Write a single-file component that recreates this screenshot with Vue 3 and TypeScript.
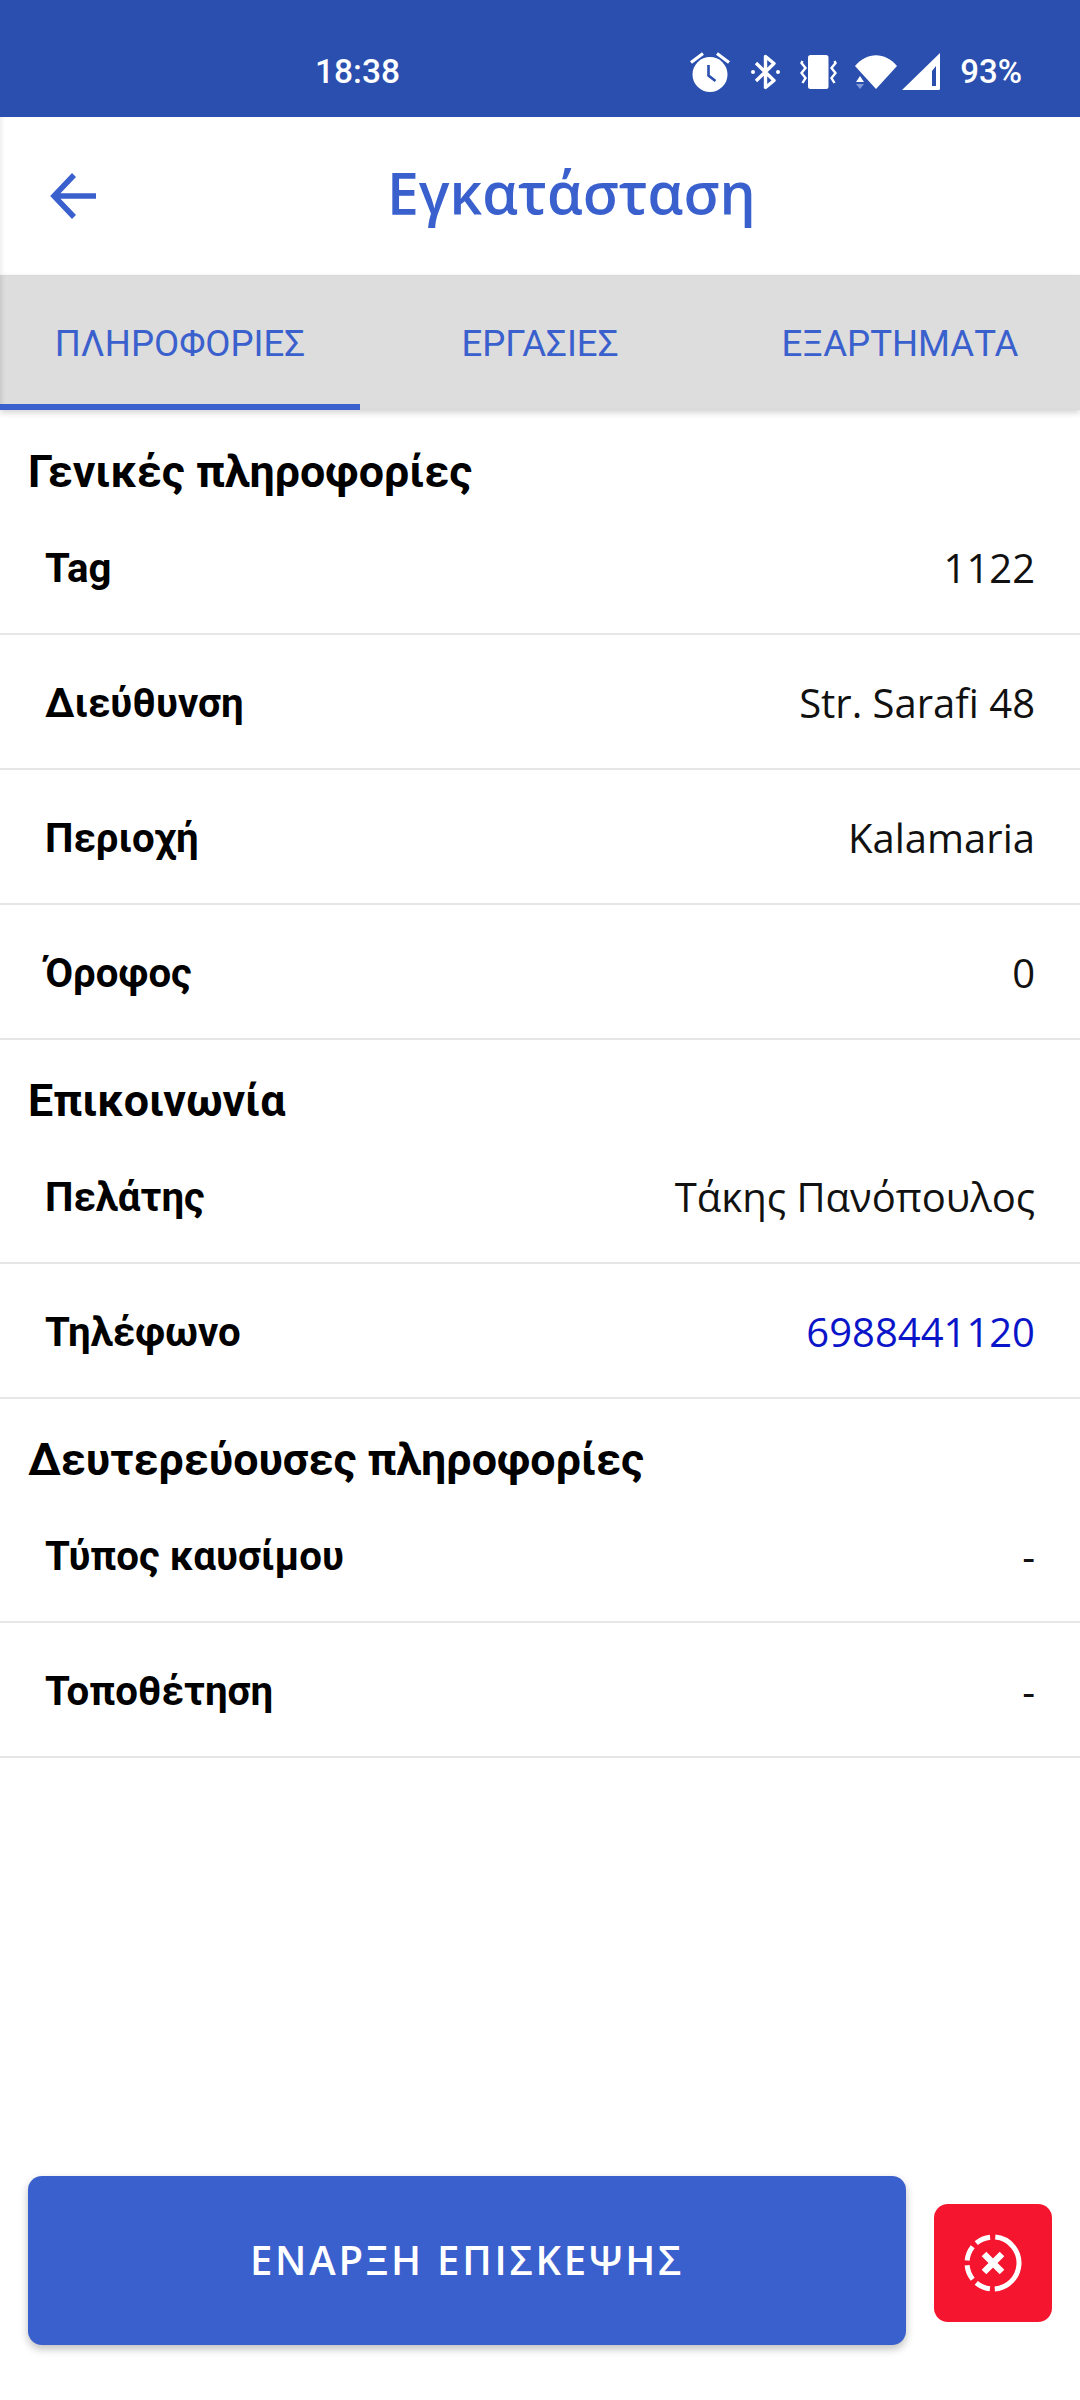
<script setup lang="ts">
interface Row { label: string; value: string; link?: boolean }
interface Section { title: string; rows: Row[] }
const tabs: string[] = ['ΠΛΗΡΟΦΟΡΙΕΣ', 'ΕΡΓΑΣΙΕΣ', 'ΕΞΑΡΤΗΜΑΤΑ']
const sections: Section[] = [
  { title: 'Γενικές πληροφορίες', rows: [
    { label: 'Tag', value: '1122' },
    { label: 'Διεύθυνση', value: 'Str. Sarafi 48' },
    { label: 'Περιοχή', value: 'Kalamaria' },
    { label: 'Όροφος', value: '0' },
  ] },
  { title: 'Επικοινωνία', rows: [
    { label: 'Πελάτης', value: 'Τάκης Πανόπουλος' },
    { label: 'Τηλέφωνο', value: '6988441120', link: true },
  ] },
  { title: 'Δευτερεύουσες πληροφορίες', rows: [
    { label: 'Τύπος καυσίμου', value: '-' },
    { label: 'Τοποθέτηση', value: '-' },
  ] },
]
</script>

<template>
  <div class="screen">
    <div class="status">
      <span class="time">18:38</span>
      <div class="status-right">
        <svg class="ic alarm" width="40" height="40" viewBox="0 0 40 40">
          <path d="M1 10.5 L13 1.5 M39 10.5 L27 1.5" stroke="#fff" stroke-width="3.2" fill="none"/>
          <circle cx="20" cy="22.5" r="17.5" fill="#fff"/>
          <path d="M18.5 13 V23.5 L25.5 29" stroke="#2a4fae" stroke-width="2.6" fill="none"/>
        </svg>
        <svg class="ic bt" width="29" height="36" viewBox="0 0 29 36">
          <path d="M5 9 L23 26.5 L14.5 33.5 V2.5 L23 9.5 L5 27" stroke="#fff" stroke-width="3.4" fill="none" stroke-linejoin="round"/>
          <circle cx="2" cy="18" r="2" fill="#fff"/>
          <circle cx="27" cy="18" r="2" fill="#fff"/>
        </svg>
        <svg class="ic vib" width="37" height="34" viewBox="0 0 37 34">
          <rect x="8" y="0" width="20.5" height="34" rx="2.5" fill="#fff"/>
          <path d="M2.5 6 L1.5 8 L5.5 13 L1.5 18 L5.5 23 L2.5 28 M34.5 6 L35.5 8 L31.5 13 L35.5 18 L31.5 23 L34.5 28" stroke="#fff" stroke-width="2.4" fill="none"/>
        </svg>
        <svg class="ic wifi" width="42" height="34" viewBox="0 0 42 34">
          <path d="M0 11 C12 -3.5 30 -3.5 42 11 L21 34 Z" fill="#fff"/>
          <path d="M1 27 L5 21 L9 27 Z" fill="#fff"/>
          <path d="M1 29 L9 29 L5 34 Z" fill="#7e97d6"/>
        </svg>
        <svg class="ic sig" width="38" height="37" viewBox="0 0 38 37">
          <path fill-rule="evenodd" d="M38 0 V35.5 Q38 37 36.5 37 H0 Z M34 13 L30 18 V33 H34 Z" fill="#fff"/>
        </svg>
        <span class="pct">93%</span>
      </div>
    </div>

    <header class="topbar">
      <svg class="back" width="46" height="46" viewBox="0 0 46 46">
        <path d="M24 2 L4 23 L24 44 M4 23 H46" stroke="#3a60cd" stroke-width="5.5" fill="none"/>
      </svg>
      <h1 class="title">Εγκατάσταση</h1>
    </header>

    <nav class="tabs">
      <div v-for="(t, i) in tabs" :key="t" class="tab" :class="{ active: i === 0 }">{{ t }}</div>
    </nav>

    <main class="content">
      <section v-for="s in sections" :key="s.title">
        <h2 class="sec">{{ s.title }}</h2>
        <div v-for="r in s.rows" :key="r.label" class="row">
          <span class="label">{{ r.label }}</span>
          <span class="value" :class="{ link: r.link }">{{ r.value }}</span>
        </div>
      </section>
    </main>

    <footer class="actions">
      <button class="start">ΕΝΑΡΞΗ ΕΠΙΣΚΕΨΗΣ</button>
      <button class="cancel" aria-label="cancel">
        <svg width="60" height="60" viewBox="0 0 60 60">
          <circle cx="30" cy="30" r="26" stroke="#fff" stroke-width="5" fill="none" stroke-dasharray="77 5 15 5 15 5 15 5 15 6" transform="rotate(-85 30 30)"/>
          <path d="M21 21 L39 39 M39 21 L21 39" stroke="#fff" stroke-width="6.5" fill="none"/>
        </svg>
      </button>
    </footer>
  </div>
</template>

<style scoped>
.screen {
  width: 1080px;
  height: 2400px;
  background: #fff;
  display: flex;
  flex-direction: column;
  overflow: hidden;
  font-family: "Roboto", sans-serif;
}
.status {
  height: 117px;
  flex: none;
  background: #2a4fae;
  color: #fff;
  display: flex;
  align-items: center;
  padding-top: 26px;
  box-sizing: border-box;
  font-size: 33.5px;
  font-weight: 500;
}
.time { margin-left: 315px; }
.status-right {
  margin-left: auto;
  margin-right: 58px;
  display: flex;
  align-items: center;
}
.ic { display: block; flex: none; }
.bt { margin-left: 21px; }
.vib { margin-left: 20px; }
.wifi { margin-left: 18px; }
.sig { margin-left: 5px; }
.pct { margin-left: 20px; font-size: 33px; }
.topbar {
  height: 158px;
  flex: none;
  display: flex;
  align-items: center;
  background: #fff;
  box-shadow: inset 4px 0 4px -2px rgba(0,0,0,0.07);
}
.back { margin-left: 50px; flex: none; }
.title {
  margin: 0 0 8px 291px;
  font-family: "Open Sans", sans-serif;
  font-size: 57px;
  font-weight: 600;
  color: #3a60cd;
}
.tabs {
  height: 135px;
  flex: none;
  background: #dddddd;
  display: flex;
  box-shadow: 0 3px 6px rgba(0,0,0,0.16), inset 4px 0 4px -2px rgba(0,0,0,0.1);
  position: relative;
}
.tab {
  width: 360px;
  box-sizing: border-box;
  border-bottom: 6px solid transparent;
  padding-top: 8px;
  display: flex;
  align-items: center;
  justify-content: center;
  color: #3a60cd;
  font-size: 36.6px;
}
.tab.active { border-bottom-color: #3a60cd; }
.content { flex: 1; }
.sec {
  margin: 0;
  padding: 33px 0 0 28px;
  height: 89px;
  box-sizing: border-box;
  display: flex;
  align-items: center;
  font-size: 44.8px;
  font-weight: 700;
  color: #000;
}
section:first-child .sec { height: 89.5px; }
.row {
  height: 135px;
  box-sizing: border-box;
  border-bottom: 2px solid #e6e6e6;
  padding: 4px 45px 0;
  display: flex;
  align-items: center;
  justify-content: space-between;
}
.label { font-size: 40.2px; font-weight: 700; color: #000; }
.value { font-family: "Open Sans", sans-serif; font-size: 40px; color: #111; margin-bottom: 2px; }
.value.link { color: #0a14c8; }
.actions {
  flex: none;
  height: 224px;
  display: flex;
  align-items: flex-start;
  padding-left: 28px;
  box-sizing: border-box;
}
button { border: none; padding: 0; cursor: pointer; }
.start {
  width: 878px;
  height: 169px;
  padding-bottom: 2px;
  border-radius: 14px;
  background: #3a60cd;
  color: #fff;
  font-family: "Open Sans", sans-serif;
  font-size: 40px;
  font-weight: 600;
  letter-spacing: 2.8px;
  box-shadow: 0 4px 8px rgba(0,0,0,0.25);
}
.cancel {
  margin: 28px 0 0 28px;
  width: 118px;
  height: 118px;
  border-radius: 14px;
  background: #f5152f;
  display: flex;
  align-items: center;
  justify-content: center;
}
</style>
